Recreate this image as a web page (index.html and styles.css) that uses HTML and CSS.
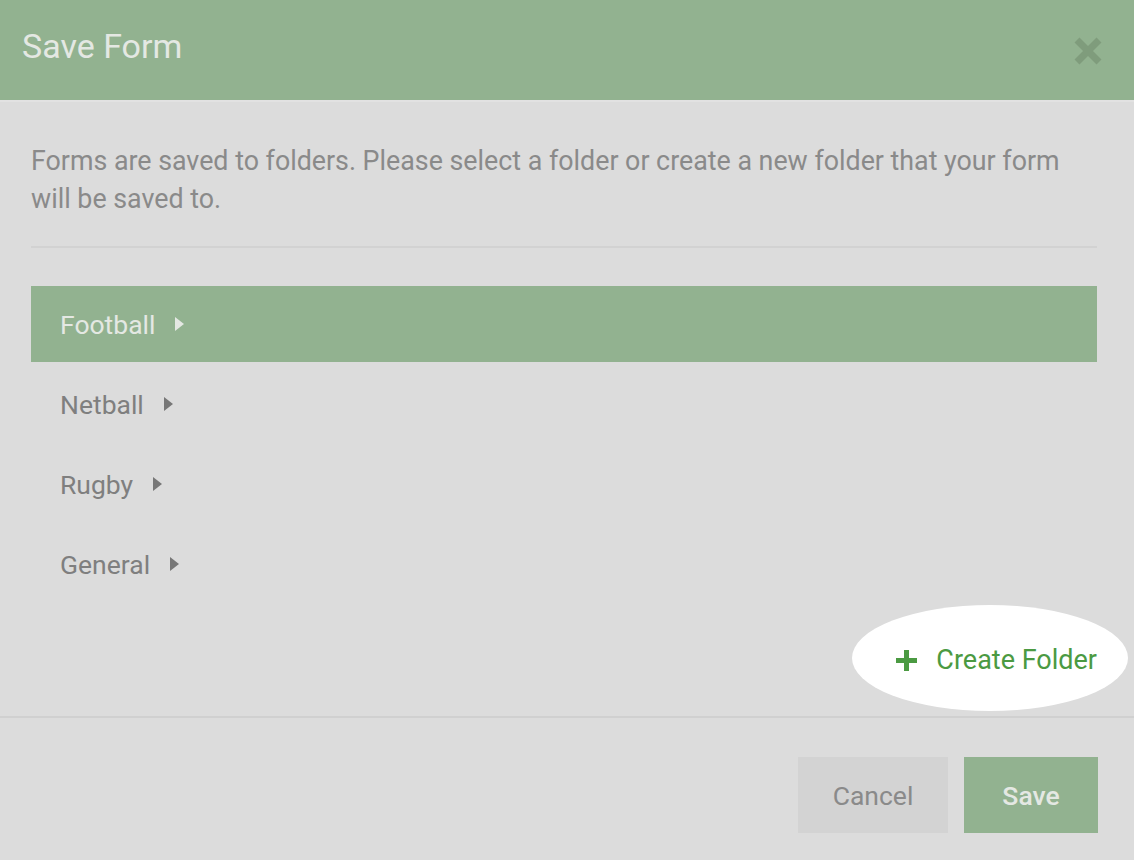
FILE: index.html
```html
<!DOCTYPE html>
<html lang="en">
<head>
  <meta charset="UTF-8">
  <meta name="viewport" content="width=device-width, initial-scale=1.0">
  <title>Save Form</title>
  <link rel="stylesheet" href="styles.css">
</head>
<body>
  <div class="modal">
    <div class="modal-header">
      <h1>Save Form</h1>
      <span class="close-btn">
        <svg width="32" height="32" viewBox="0 0 32 32"><path d="M5 5 L27 27 M27 5 L5 27" stroke="#7f9c7c" stroke-width="7"/></svg>
      </span>
    </div>

    <div class="modal-body">
      <p class="intro">Forms are saved to folders. Please select a folder or create a new folder that your form will be saved to.</p>

      <ul class="folders">
        <li class="folder active">Football <span class="arrow"></span></li>
        <li class="folder">Netball <span class="arrow"></span></li>
        <li class="folder">Rugby <span class="arrow"></span></li>
        <li class="folder">General <span class="arrow"></span></li>
      </ul>

      <div class="create-row">
        <span class="highlight"></span>
        <a class="create-btn" href="#">
          <svg width="23" height="23" viewBox="0 0 23 23"><path d="M11.5 1 V22 M1 11.5 H22" stroke="#4b9a42" stroke-width="5"/></svg>
          Create Folder
        </a>
      </div>
    </div>

    <div class="modal-footer">
      <button class="btn-cancel">Cancel</button>
      <button class="btn-save">Save</button>
    </div>
  </div>
</body>
</html>
```

FILE: styles.css
```css
body {
  margin: 0;
  font-family: Roboto, "Liberation Sans", sans-serif;
  background-color: #dcdcdc;
}

.modal {
  width: 1134px;
  height: 860px;
  background-color: #dcdcdc;
}

.modal-header {
  height: 102px;
  background-color: #92b290;
  border-bottom: 2px solid #e2e2e2;
  box-sizing: border-box;
  display: flex;
  align-items: center;
  justify-content: space-between;
  padding: 0 30px 0 22px;
}

.modal-header h1 {
  margin: 0 0 8px 0;
  font-size: 34px;
  font-weight: 400;
  color: #e4e8e3;
}

.close-btn {
  display: flex;
  margin-top: 2px;
}

.modal-body {
  padding: 0 37px 0 31px;
  height: 616px;
  box-sizing: border-box;
  border-bottom: 2px solid #d0d0d0;
  position: relative;
}

.intro {
  margin: 0;
  padding: 40px 0 28px;
  font-size: 26.8px;
  line-height: 38px;
  color: #8a8a8a;
  border-bottom: 2px solid #d2d2d2;
}

.folders {
  list-style: none;
  margin: 38px 0 0;
  padding: 0;
}

.folder {
  height: 80px;
  display: flex;
  align-items: center;
  padding-left: 29px;
  font-size: 26.5px;
  color: #7f7f7f;
}

.folder.active {
  height: 76px;
  margin-bottom: 2px;
  background-color: #92b290;
  color: #e4e8e3;
}

.arrow {
  display: inline-block;
  width: 0;
  height: 0;
  margin-left: 20px;
  border-top: 7px solid transparent;
  border-bottom: 7px solid transparent;
  border-left: 9px solid #777777;
}

.folder.active .arrow {
  border-left-color: #e4e8e3;
}

.create-row {
  position: relative;
  display: flex;
  justify-content: flex-end;
  margin-top: 40px;
}

.highlight {
  position: absolute;
  right: -31px;
  top: -39px;
  width: 276px;
  height: 106px;
  border-radius: 50%;
  background-color: #ffffff;
}

.create-btn {
  position: relative;
  display: flex;
  align-items: center;
  gap: 18px;
  font-size: 27px;
  color: #4b9a42;
  text-decoration: none;
}

.modal-footer {
  display: flex;
  justify-content: flex-end;
  gap: 16px;
  padding: 39px 36px 0 0;
}

.modal-footer button {
  height: 76px;
  border: none;
  font-family: Roboto, "Liberation Sans", sans-serif;
  font-size: 26.5px;
  cursor: pointer;
}

.btn-cancel {
  width: 150px;
  background-color: #d3d3d3;
  color: #8a8a8a;
}

.btn-save {
  width: 134px;
  background-color: #92b290;
  color: #e4e8e3;
  font-weight: 500;
  font-size: 26px;
}
```
